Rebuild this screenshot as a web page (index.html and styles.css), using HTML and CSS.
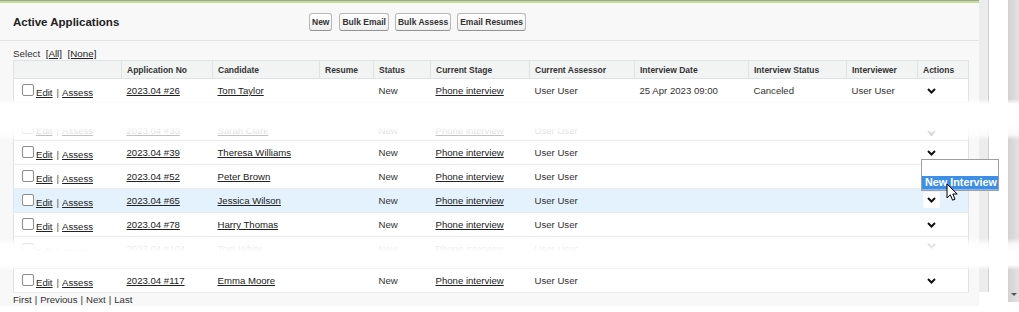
FILE: index.html
```html
<!DOCTYPE html>
<html lang="en">
<head>
  <meta charset="UTF-8">
  <title>Active Applications</title>
  <link rel="stylesheet" href="styles.css">
</head>
<body>

  <div class="frame">
    <!-- main block -->
    <div class="panel">
      <div class="panel-head">
        <h2 class="title">Active Applications</h2>
        <div class="btns">
          <button class="btn btn-first">New</button>
          <button class="btn">Bulk Email</button>
          <button class="btn">Bulk Assess</button>
          <button class="btn">Email Resumes</button>
        </div>
      </div>

      <div class="panel-body">
        <div class="select-line">Select&nbsp;&nbsp;<a href="#">[All]</a>&nbsp;&nbsp;<a href="#">[None]</a></div>

        <table class="apps">
          <colgroup>
            <col style="width:108px"><col style="width:91px"><col style="width:107px"><col style="width:54px">
            <col style="width:57px"><col style="width:99px"><col style="width:105px"><col style="width:114px">
            <col style="width:98px"><col style="width:71px"><col style="width:51px">
          </colgroup>
          <thead>
            <tr>
              <th></th>
              <th>Application No</th>
              <th>Candidate</th>
              <th>Resume</th>
              <th>Status</th>
              <th>Current Stage</th>
              <th>Current Assessor</th>
              <th>Interview Date</th>
              <th>Interview Status</th>
              <th>Interviewer</th>
              <th>Actions</th>
            </tr>
          </thead>
          <tbody>
            <tr class="row">
              <td class="ctl"><span class="cb"></span><a href="#">Edit</a><span class="pipe">|</span><a href="#">Assess</a></td>
              <td><a href="#">2023.04 #26</a></td>
              <td><a href="#">Tom Taylor</a></td>
              <td></td>
              <td>New</td>
              <td><a href="#">Phone interview</a></td>
              <td>User User</td>
              <td>25 Apr 2023 09:00</td>
              <td>Canceled</td>
              <td>User User</td>
              <td class="act"><svg class="chev" width="9" height="6" viewBox="0 0 9 6"><polyline points="1,1 4.5,4.5 8,1"/></svg></td>
            </tr>
            <tr class="row ghost-a">
              <td class="ctl"><span class="cb"></span><a href="#">Edit</a><span class="pipe">|</span><a href="#">Assess</a></td>
              <td><a href="#">2023.04 #33</a></td>
              <td><a href="#">Sarah Clark</a></td>
              <td></td>
              <td>New</td>
              <td><a href="#">Phone interview</a></td>
              <td>User User</td>
              <td></td>
              <td></td>
              <td></td>
              <td class="act"><svg class="chev" width="9" height="6" viewBox="0 0 9 6"><polyline points="1,1 4.5,4.5 8,1"/></svg></td>
            </tr>
            <tr class="row">
              <td class="ctl"><span class="cb"></span><a href="#">Edit</a><span class="pipe">|</span><a href="#">Assess</a></td>
              <td><a href="#">2023.04 #39</a></td>
              <td><a href="#">Theresa Williams</a></td>
              <td></td>
              <td>New</td>
              <td><a href="#">Phone interview</a></td>
              <td>User User</td>
              <td></td>
              <td></td>
              <td></td>
              <td class="act"><svg class="chev" width="9" height="6" viewBox="0 0 9 6"><polyline points="1,1 4.5,4.5 8,1"/></svg></td>
            </tr>
            <tr class="row">
              <td class="ctl"><span class="cb"></span><a href="#">Edit</a><span class="pipe">|</span><a href="#">Assess</a></td>
              <td><a href="#">2023.04 #52</a></td>
              <td><a href="#">Peter Brown</a></td>
              <td></td>
              <td>New</td>
              <td><a href="#">Phone interview</a></td>
              <td>User User</td>
              <td></td>
              <td></td>
              <td></td>
              <td class="act"></td>
            </tr>
            <tr class="row hl">
              <td class="ctl"><span class="cb"></span><a href="#">Edit</a><span class="pipe">|</span><a href="#">Assess</a></td>
              <td><a href="#">2023.04 #65</a></td>
              <td><a href="#">Jessica Wilson</a></td>
              <td></td>
              <td>New</td>
              <td><a href="#">Phone interview</a></td>
              <td>User User</td>
              <td></td>
              <td></td>
              <td></td>
              <td class="act"><span class="act-sel"><svg class="chev" width="9" height="6" viewBox="0 0 9 6"><polyline points="1,1 4.5,4.5 8,1"/></svg></span></td>
            </tr>
            <tr class="row">
              <td class="ctl"><span class="cb"></span><a href="#">Edit</a><span class="pipe">|</span><a href="#">Assess</a></td>
              <td><a href="#">2023.04 #78</a></td>
              <td><a href="#">Harry Thomas</a></td>
              <td></td>
              <td>New</td>
              <td><a href="#">Phone interview</a></td>
              <td>User User</td>
              <td></td>
              <td></td>
              <td></td>
              <td class="act"><svg class="chev" width="9" height="6" viewBox="0 0 9 6"><polyline points="1,1 4.5,4.5 8,1"/></svg></td>
            </tr>
            <tr class="row ghost-b">
              <td class="ctl"><span class="cb"></span><a href="#">Edit</a><span class="pipe">|</span><a href="#">Assess</a></td>
              <td><a href="#">2023.04 #104</a></td>
              <td><a href="#">Tom White</a></td>
              <td></td>
              <td>New</td>
              <td><a href="#">Phone interview</a></td>
              <td>User User</td>
              <td></td>
              <td></td>
              <td></td>
              <td class="act"><svg class="chev" width="9" height="6" viewBox="0 0 9 6"><polyline points="1,1 4.5,4.5 8,1"/></svg></td>
            </tr>
            <tr class="row">
              <td class="ctl"><span class="cb"></span><a href="#">Edit</a><span class="pipe">|</span><a href="#">Assess</a></td>
              <td><a href="#">2023.04 #117</a></td>
              <td><a href="#">Emma Moore</a></td>
              <td></td>
              <td>New</td>
              <td><a href="#">Phone interview</a></td>
              <td>User User</td>
              <td></td>
              <td></td>
              <td></td>
              <td class="act"><svg class="chev" width="9" height="6" viewBox="0 0 9 6"><polyline points="1,1 4.5,4.5 8,1"/></svg></td>
            </tr>
          </tbody>
        </table>

        <div class="pager">First<span class="sep">|</span>Previous<span class="sep">|</span>Next<span class="sep">|</span>Last</div>
      </div>
    </div>

    <!-- window edge + scrollbar -->
    <div class="strip"></div>
    <div class="gutter"></div>
    <div class="scrollbar"><span class="scroll-arrow"></span></div>
  </div>

  <!-- cut marks in the capture -->
  <div class="tear tear-a"></div>
  <div class="tear tear-b"></div>

  <!-- open picklist -->
  <div class="picklist">
    <div class="pick-blank"></div>
    <div class="pick-sel">New Interview</div>
  </div>
  <svg class="cursor" width="13" height="19" viewBox="0 0 13 19">
    <path d="M1 1 L1 15 L4.3 11.8 L6.6 17.2 L9 16.2 L6.8 11 L11.2 11 Z"/>
  </svg>

</body>
</html>
```

FILE: styles.css
```css
/* ===== page ===== */
body {
  margin: 0;
  font-family: "Liberation Sans", Arial, sans-serif;
  font-size: 9.6px;
  color: #333;
  background: #fff;
}

.frame {
  display: flex;
  height: 312px;
}

/* ===== panel ===== */
.panel {
  width: 979px;
  height: 306px;
  flex-shrink: 0;
  background: #f8f8f8;
  border-top: 1px solid #a4a4a4;
  box-sizing: border-box;
}

.panel-head {
  display: flex;
  align-items: center;
  height: 37px;
  padding-left: 13px;
  border-top: 2px solid #c4de90;
  border-bottom: 1px solid #e2e2e2;
}

.title {
  margin: 0;
  width: 296px;
  font-size: 11.5px;
  font-weight: bold;
  color: #222;
}

.btns {
  display: flex;
  gap: 6px;
}
.btn {
  height: 18px;
  padding: 0 2px;
  border: 1px solid #b8b8b8;
  border-bottom-color: #929292;
  border-radius: 3px;
  background: linear-gradient(#fff, #f0f0f0);
  font: bold 8.5px "Liberation Sans", Arial, sans-serif;
  color: #333;
}
.btn-first {
  margin-right: 1px;
}

.panel-body {
  padding: 6px 0 0 13px;
}

.select-line {
  height: 13px;
  line-height: 13px;
  font-size: 9.8px;
}
.select-line a {
  color: #222;
}

/* ===== table ===== */
.apps {
  width: 955px;
  table-layout: fixed;
  border-collapse: collapse;
  background: #fff;
  border: 1px solid #e0e3e5;
}
.apps th {
  height: 17px;
  padding: 0 5px;
  text-align: left;
  font-size: 8.5px;
  font-weight: bold;
  color: #333;
  background: #f2f3f3;
  border: 1px solid #e0e3e5;
  white-space: nowrap;
}
.apps td {
  height: 23px;
  padding: 0 5px;
  border-bottom: 1px solid #ececec;
  white-space: nowrap;
  overflow: hidden;
  vertical-align: middle;
}
.apps a {
  color: #222;
  text-decoration: underline;
}

.row.hl td {
  background: #e3f2fd;
}
.row.ghost-a td {
  height: 33px;
  vertical-align: bottom;
  padding-bottom: 4px;
}
.row.ghost-b td {
  height: 25px;
  vertical-align: top;
  padding-top: 6px;
}

.apps td.ctl {
  padding-left: 8px;
}
.cb {
  display: inline-block;
  width: 10px;
  height: 10px;
  margin-right: 2px;
  border: 1px solid #8c8c8c;
  border-radius: 2px;
  background: #fff;
}
.pipe {
  margin: 0 3px 0 4px;
  color: #555;
}

.apps td.act {
  padding-left: 9px;
}
.chev {
  display: block;
}
.chev polyline {
  fill: none;
  stroke: #111;
  stroke-width: 2;
}
.act-sel {
  display: inline-block;
  margin-left: -4px;
  padding: 5px 4px;
  background: #fff;
  border-radius: 2px;
}

/* ===== pager ===== */
.pager {
  height: 12px;
  line-height: 12px;
  padding-top: 1px;
}
.sep {
  margin: 0 3px;
}

/* ===== right edge ===== */
.strip {
  width: 9px;
  height: 292px;
  background: #ececec;
  border-right: 1px solid #cfcfcf;
}
.gutter {
  width: 19px;
}
.scrollbar {
  width: 11px;
  height: 302px;
  background: linear-gradient(to right, #d2d2d2, #e2e2e2);
  display: flex;
  flex-direction: column;
  justify-content: flex-end;
  align-items: center;
  padding-bottom: 6px;
  box-sizing: border-box;
}
.scroll-arrow {
  width: 0;
  height: 0;
  border-left: 3px solid transparent;
  border-right: 3px solid transparent;
  border-top: 3px solid #555;
}

/* ===== torn bands ===== */
.tear {
  position: absolute;
  left: 0;
  width: 1019px;
}
.tear-a {
  top: 99px;
  height: 42px;
  background: linear-gradient(rgba(255,255,255,0) 0px, #fff 5px, #fff 27px, rgba(255,255,255,.9) 31px, rgba(255,255,255,.8) 36px, rgba(255,255,255,0) 41px);
}
.tear-b {
  top: 238px;
  height: 33px;
  background: linear-gradient(rgba(255,255,255,0) 0px, rgba(255,255,255,.85) 6px, rgba(255,255,255,.94) 11px, #fff 14px, #fff 27px, rgba(255,255,255,0) 32px);
}

/* ===== picklist ===== */
.picklist {
  position: absolute;
  left: 921px;
  top: 159px;
  width: 76px;
  background: #fff;
  border: 1px solid #9e9e9e;
}
.pick-blank {
  height: 16px;
}
.pick-sel {
  height: 13px;
  line-height: 13px;
  padding-left: 3px;
  background: #3d8ee6;
  border-bottom: 1px solid #8ab9ee;
  color: #fff;
  font-size: 10.8px;
  font-weight: bold;
  white-space: nowrap;
}

.cursor {
  position: absolute;
  left: 946px;
  top: 183px;
}
.cursor path {
  fill: #fff;
  stroke: #000;
  stroke-width: 1;
  stroke-linejoin: round;
}
```
